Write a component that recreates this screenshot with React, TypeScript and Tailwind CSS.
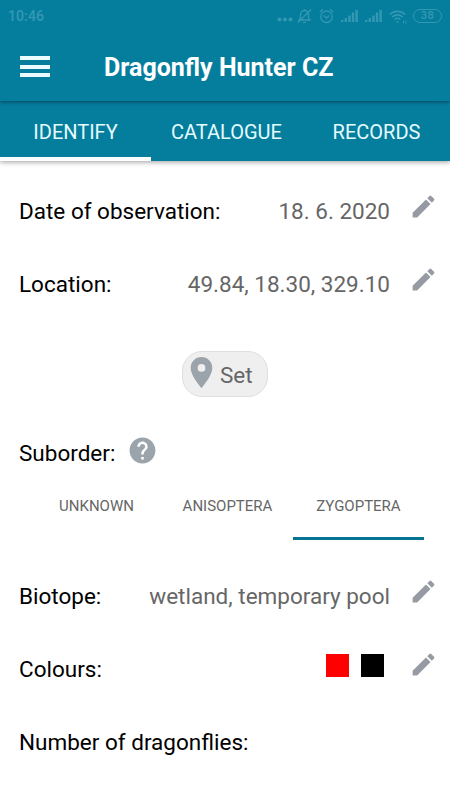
import type { ReactNode } from 'react';
import { MdEdit, MdHelp, MdPlace } from 'react-icons/md';

function SignalIcon() {
  return (
    <svg className="h-[14px] w-[18px]" viewBox="0 0 18 14" fill="currentColor">
      <rect x="0" y="11" width="2.4" height="2" />
      <rect x="3.6" y="9" width="2.4" height="4" />
      <rect x="7.2" y="6.5" width="2.4" height="6.5" />
      <rect x="10.8" y="3.5" width="2.4" height="9.5" />
      <rect x="14.4" y="1" width="2.4" height="12" />
    </svg>
  );
}

function StatusBar() {
  return (
    <div className="flex h-8 items-center justify-between pl-[8px] pr-[8px] text-[#3598b3]">
      <span className="text-[14px] leading-4 tracking-[0.1px] font-medium">10:46</span>
      <div className="flex items-center">
        <svg className="mr-[4px] h-[14px] w-[16px]" viewBox="0 0 16 14" fill="currentColor">
          <circle cx="2.5" cy="10.5" r="2" />
          <circle cx="8" cy="10.5" r="2" />
          <circle cx="13.5" cy="10.5" r="2" />
        </svg>
        <svg className="mr-[7px] h-[16px] w-[15px]" viewBox="0 0 15 16" fill="none" stroke="currentColor" strokeWidth="1.3">
          <path d="M2 12h11l-1.5-2V6.5a4 4 0 0 0-8 0V10L2 12zM6 14.3h3M7.5 2.5V1M1 14.5 14 1.5" />
        </svg>
        <svg className="mr-[7px] h-[16px] w-[15px]" viewBox="0 0 15 16" fill="none" stroke="currentColor" strokeWidth="1.3">
          <circle cx="7.5" cy="8.7" r="5.8" />
          <path d="M.8 4 4 1.3M14.2 4 11 1.3M4.8 7.5l2.7 2.7 2.7-2.7" />
        </svg>
        <SignalIcon />
        <span className="w-[6px]" />
        <SignalIcon />
        <svg className="ml-[6px] h-[15px] w-[18px]" viewBox="0 0 18 15" fill="none" stroke="currentColor" strokeWidth="1.6">
          <path d="M.8 5.5a11 11 0 0 1 15.4 0M3.3 8a7.5 7.5 0 0 1 10.4 0M5.7 10.5a4 4 0 0 1 5.6 0" />
          <circle cx="8.5" cy="12.7" r="1" fill="currentColor" stroke="none" />
          <path d="M14.5 11.5v3M17 11.5v3" strokeWidth="1" />
        </svg>
        <span className="ml-[6px] flex h-[14px] w-[29px] items-center justify-center rounded-full border border-current text-[11px] font-medium tracking-[0.5px]">
          38
        </span>
      </div>
    </div>
  );
}

function Header() {
  return (
    <header className="relative z-10 h-[101px] bg-[#057e9e] shadow-[0_1px_4px_rgba(0,0,0,0.45)]">
      <StatusBar />
      <div className="flex h-[69px] items-center pl-5">
        <div className="flex h-[21px] w-[30px] flex-col justify-between">
          <span className="h-[4px] bg-[#eafcff]" />
          <span className="h-[4px] bg-[#eafcff]" />
          <span className="h-[4px] bg-[#eafcff]" />
        </div>
        <h1 className="ml-[54px] pt-[2px] text-[25px] font-bold text-white">Dragonfly Hunter CZ</h1>
      </div>
    </header>
  );
}

function Tabs() {
  return (
    <nav className="grid h-[60px] grid-cols-[151px_151px_148px] bg-[#057e9e] pt-[6px] text-center text-[20px] leading-[50px] text-[#e4fbff] shadow-[0_1px_5px_rgba(0,0,0,0.4)]">
      <span className="border-b-4 border-white">IDENTIFY</span>
      <span>CATALOGUE</span>
      <span className="pl-[1px]">RECORDS</span>
    </nav>
  );
}

function Row({ label, children }: { label: string; children?: ReactNode }) {
  return (
    <div className="flex h-[73px] items-center pl-[19px] pr-[12px]">
      <span className="flex-1 whitespace-nowrap text-black">{label}</span>
      {children}
      {children && <MdEdit className="mb-[10px] ml-[19px] size-[29px] text-[#969ba3]" />}
    </div>
  );
}

export default function App() {
  return (
    <div className="h-[800px] w-[450px] overflow-hidden bg-white font-['Roboto',sans-serif] text-[22.5px] text-[#666]">
      <Header />
      <Tabs />

      <main className="pt-[14px]">
        <Row label="Date of observation:">
          <span>18. 6. 2020</span>
        </Row>
        <Row label="Location:">
          <span>49.84, 18.30, 329.10</span>
        </Row>

        <div className="flex h-[96px] items-end justify-center pb-0">
          <button className="mb-[20px] flex h-[46px] w-[86px] items-center rounded-[20px] border border-[#dedede] bg-[#efefef]">
            <MdPlace className="mb-[3px] size-[37px] text-[#9ba3ab]" />
            <span className="pt-[3px]">Set</span>
          </button>
        </div>

        <div className="flex h-[73px] items-center pl-[19px]">
          <span className="text-black">Suborder:</span>
          <MdHelp className="mb-[7px] ml-[12px] size-[31px] text-[#9ba3ab]" />
        </div>
        <div className="grid h-[50px] grid-cols-3 pl-[31px] pr-[26px] text-center text-[15px] leading-[32px]">
          <span>UNKNOWN</span>
          <span>ANISOPTERA</span>
          <span className="border-b-[3px] border-[#057392]">ZYGOPTERA</span>
        </div>

        <div className="pt-5">
          <Row label="Biotope:">
            <span>wetland, temporary pool</span>
          </Row>
          <Row label="Colours:">
            <div className="mb-[9px] mr-[6px] flex gap-[12px]">
              <span className="size-[23px] bg-[#ff0000]" />
              <span className="size-[23px] bg-black" />
            </div>
          </Row>
          <Row label="Number of dragonflies:" />
        </div>
      </main>
    </div>
  );
}
